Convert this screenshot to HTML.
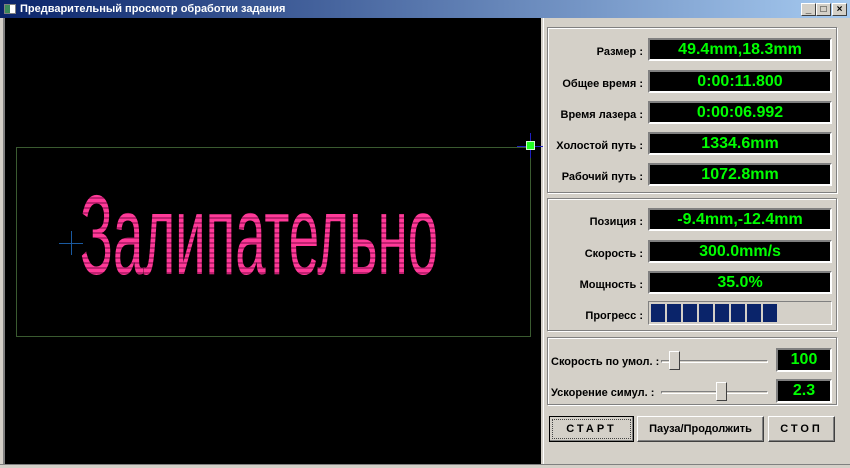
<!DOCTYPE html>
<html><head><meta charset="utf-8"><style>
*{box-sizing:border-box;margin:0;padding:0}
body{width:850px;height:468px;background:#d4d0c8;position:relative;overflow:hidden;font-family:"Liberation Sans","DejaVu Sans",sans-serif}
.abs{position:absolute}
.title{left:0;top:0;width:850px;height:18px;background:linear-gradient(90deg,#0a246a,#a6caf0);color:#fff;font-weight:bold;font-size:11px;line-height:18px;padding-left:20px}
.tb{top:3px;width:15px;height:13px;background:#d4d0c8;border:1px solid;border-color:#fff #404040 #404040 #fff;font-size:10px;line-height:11px;text-align:center;color:#000;font-weight:bold}
.canvas{left:3px;top:18px;width:538px;height:447px;background:#000;border-left:2px solid #808080}
.grp{border:1px solid #808080;box-shadow:1px 1px 0 #fff, inset 1px 1px 0 #fff}
.lbl{font-size:11px;font-weight:bold;color:#000;text-align:right;width:120px}
.val{background:#000;color:#0f0;font-weight:bold;font-size:16px;text-align:center;border:2px solid;border-color:#808080 #fff #fff #808080;line-height:19px;height:23px}
.btn{height:26px;border:1px solid;border-color:#fff #404040 #404040 #fff;box-shadow:inset -1px -1px 0 #808080;font-size:11px;font-weight:bold;text-align:center;line-height:24px;background:#d4d0c8}
.txt{left:75px;top:161px;font-size:113px;line-height:113px;transform:scaleX(0.483);transform-origin:0 0;white-space:nowrap;color:#ff2e90;background:repeating-linear-gradient(#ff3a98 0 3px,#c02070 3px 5px);-webkit-background-clip:text;background-clip:text;-webkit-text-fill-color:transparent}
</style></head><body>
<div class="abs title">Предварительный просмотр обработки задания</div>
<div class="abs" style="left:4px;top:4px;width:12px;height:10px;background:#fff;border:1px solid #808080"><div style="width:5px;height:8px;background:#3a8a5a"></div></div>
<div class="abs tb" style="left:801px">_</div>
<div class="abs tb" style="left:816px">□</div>
<div class="abs tb" style="left:832px">×</div>
<div class="abs canvas">
 <div class="abs" style="left:11px;top:129px;width:515px;height:190px;border:1px solid #3a5a30"></div>
 <div class="abs txt">Залипательно</div>
 <div class="abs" style="left:54px;top:225px;width:24px;height:1px;background:#1a5aa0"></div>
 <div class="abs" style="left:66px;top:213px;width:1px;height:24px;background:#1a5aa0"></div>
 <div class="abs" style="left:512px;top:128px;width:26px;height:1px;background:#2020c0"></div>
 <div class="abs" style="left:525px;top:115px;width:1px;height:25px;background:#2020c0"></div>
 <div class="abs" style="left:521px;top:123px;width:9px;height:9px;background:#2f2;border:1px solid #cfc"></div>
</div>
<div class="abs" style="left:543px;top:18px;width:1px;height:450px;background:#fff"></div>
<div class="abs grp" style="left:547px;top:27px;width:290px;height:166px"></div>
<div class="abs grp" style="left:547px;top:198px;width:290px;height:133px"></div>
<div class="abs grp" style="left:547px;top:337px;width:290px;height:68px"></div>

<div class="abs lbl" style="left:523px;top:46px">Размер :</div><div class="abs val" style="left:648px;top:38px;width:184px">49.4mm,18.3mm</div>
<div class="abs lbl" style="left:523px;top:78px">Общее время :</div><div class="abs val" style="left:648px;top:70px;width:184px">0:00:11.800</div>
<div class="abs lbl" style="left:523px;top:109px">Время лазера :</div><div class="abs val" style="left:648px;top:101px;width:184px">0:00:06.992</div>
<div class="abs lbl" style="left:523px;top:140px">Холостой путь :</div><div class="abs val" style="left:648px;top:132px;width:184px">1334.6mm</div>
<div class="abs lbl" style="left:523px;top:171px">Рабочий путь :</div><div class="abs val" style="left:648px;top:163px;width:184px">1072.8mm</div>

<div class="abs lbl" style="left:523px;top:216px">Позиция :</div><div class="abs val" style="left:648px;top:208px;width:184px">-9.4mm,-12.4mm</div>
<div class="abs lbl" style="left:523px;top:248px">Скорость :</div><div class="abs val" style="left:648px;top:240px;width:184px">300.0mm/s</div>
<div class="abs lbl" style="left:523px;top:279px">Мощность :</div><div class="abs val" style="left:648px;top:271px;width:184px">35.0%</div>
<div class="abs lbl" style="left:523px;top:310px">Прогресс :</div>
<div class="abs" style="left:648px;top:301px;width:184px;height:24px;border:1px solid;border-color:#808080 #fff #fff #808080;padding:2px;display:flex;gap:2px">
 <div style="width:14px;background:#0a246a"></div><div style="width:14px;background:#0a246a"></div><div style="width:14px;background:#0a246a"></div><div style="width:14px;background:#0a246a"></div><div style="width:14px;background:#0a246a"></div><div style="width:14px;background:#0a246a"></div><div style="width:14px;background:#0a246a"></div><div style="width:14px;background:#0a246a"></div>
</div>

<div class="abs" style="left:551px;top:356px;font-size:11px;font-weight:bold">Скорость по умол. :</div>
<div class="abs" style="left:661px;top:360px;width:107px;height:3px;border:1px solid;border-color:#808080 #fff #fff #808080"></div>
<div class="abs" style="left:669px;top:351px;width:11px;height:19px;background:#d4d0c8;border:1px solid;border-color:#fff #404040 #404040 #fff"></div>
<div class="abs val" style="left:776px;top:348px;width:56px;height:24px">100</div>
<div class="abs" style="left:551px;top:387px;font-size:11px;font-weight:bold">Ускорение симул. :</div>
<div class="abs" style="left:661px;top:391px;width:107px;height:3px;border:1px solid;border-color:#808080 #fff #fff #808080"></div>
<div class="abs" style="left:716px;top:382px;width:11px;height:19px;background:#d4d0c8;border:1px solid;border-color:#fff #404040 #404040 #fff"></div>
<div class="abs val" style="left:776px;top:379px;width:56px;height:24px">2.3</div>

<div class="abs btn" style="left:549px;top:416px;width:85px;border:1px solid #000;letter-spacing:3px"><div style="margin:2px;border:1px dotted #444;line-height:18px">СТАРТ</div></div>
<div class="abs btn" style="left:637px;top:416px;width:127px">Пауза/Продолжить</div>
<div class="abs btn" style="left:768px;top:416px;width:67px;letter-spacing:3px">СТОП</div>
<div class="abs" style="left:0;top:464px;width:850px;height:4px;background:#d4d0c8;border-top:1px solid #808080"></div>
</body></html>
